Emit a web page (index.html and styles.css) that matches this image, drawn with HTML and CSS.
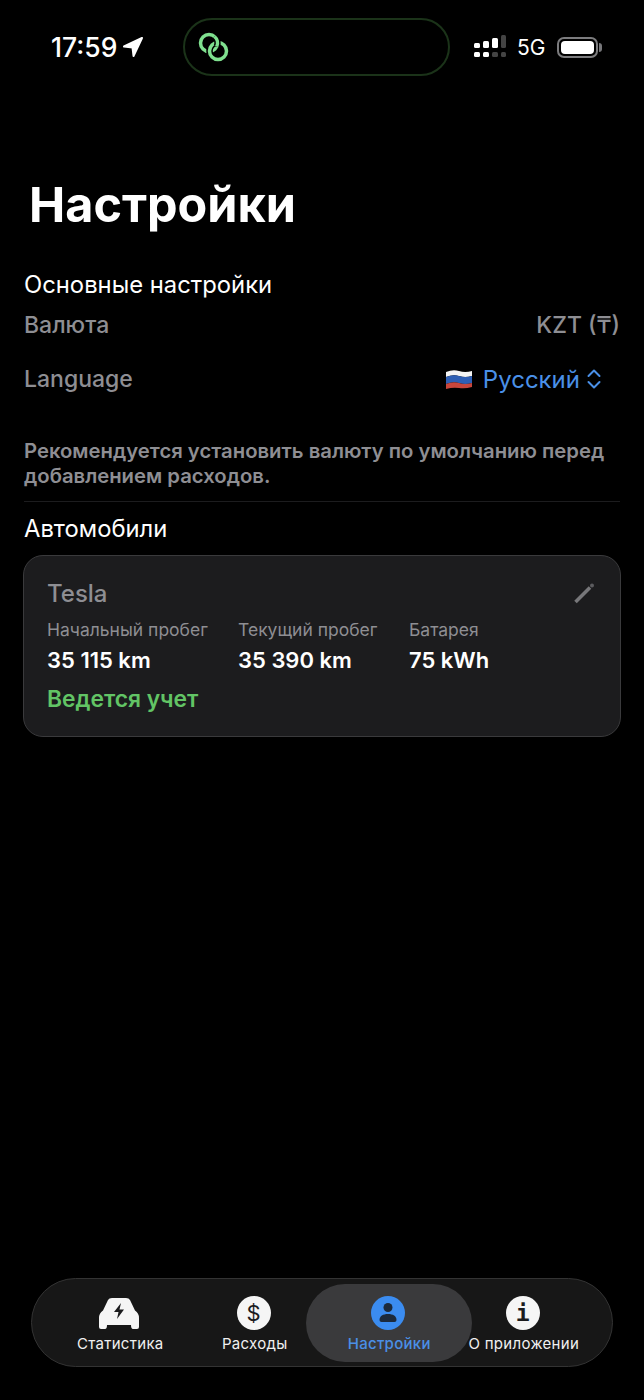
FILE: index.html
```html
<!DOCTYPE html>
<html lang="ru">
<head>
   <meta charset="UTF-8">
   <meta name="viewport" content="width=device-width, initial-scale=1.0">
   <title>Настройки</title>
   <link rel="stylesheet" href="styles.css">
</head>
<body>
   <div class="screen">
      <div class="status-bar">
         <div class="status-left">
            <span class="clock">17:59</span>
            <svg class="location" width="22" height="22" viewBox="0 0 22 22"><path d="M20 2 2 10.500 10.500 11.500 11.500 20Z" fill="#fff" stroke="#fff" stroke-width="2" stroke-linejoin="round"/></svg>
         </div>
         <div class="island">
            <svg width="36" height="32" viewBox="0 0 36 32" fill="none">
               <circle cx="13" cy="12" r="8.500" stroke="#7fe08f" stroke-width="3.500"/>
               <circle cx="22" cy="20" r="8.500" stroke="#000" stroke-width="6.500"/>
               <circle cx="22" cy="20" r="8.500" stroke="#7fe08f" stroke-width="3.500"/>
               <path d="M18.460 5.490A8.500 8.500 0 0 1 20.700 15.590" stroke="#000" stroke-width="6.500"/>
               <path d="M18.460 5.490A8.500 8.500 0 0 1 20.700 15.590" stroke="#7fe08f" stroke-width="3.500"/>
            </svg>
         </div>
         <div class="status-right">
            <svg width="33" height="24" viewBox="0 0 33 24">
               <g fill="#fff">
                  <rect x="0" y="8" width="6" height="5" rx="1.500"/><rect x="0" y="17" width="6" height="5" rx="1.500"/>
                  <rect x="9" y="6" width="6" height="7" rx="1.500"/><rect x="9" y="17" width="6" height="5" rx="1.500"/>
                  <rect x="18" y="3" width="6" height="10" rx="1.500"/>
               </g>
               <g fill="#444">
                  <rect x="18" y="17" width="6" height="5" rx="1.500"/>
                  <rect x="27" y="0" width="5" height="13" rx="1.500"/><rect x="27" y="17" width="5" height="5" rx="1.500"/>
               </g>
            </svg>
            <span class="network">5G</span>
            <div class="battery"><div class="battery-fill"></div></div>
         </div>
      </div>

      <main class="content">
         <h1 class="title">Настройки</h1>

         <h2 class="section-title">Основные настройки</h2>
         <div class="setting-row">
            <span>Валюта</span>
            <span>KZT (₸)</span>
         </div>
         <div class="setting-row">
            <span>Language</span>
            <span class="language-picker">
               <svg width="28" height="21" viewBox="0 0 28 21">
                  <path d="M1 3Q8 0 14 2T27 2V7Q20 9 14 7T1 8Z" fill="#f4f4f4"/>
                  <path d="M1 8Q8 5 14 7T27 7V14Q20 16 14 14T1 15Z" fill="#2e5fb5"/>
                  <path d="M1 15Q8 12 14 14T27 14V18Q20 20 14 19T1 20Z" fill="#c8463c"/>
               </svg>
               <span>Русский</span>
               <svg width="16" height="22" viewBox="0 0 16 22" fill="none" stroke="#4a90e8" stroke-width="2" stroke-linecap="round" stroke-linejoin="round"><path d="M2.500 8 8 2.500 13.500 8M2.500 14 8 19.500 13.500 14"/></svg>
            </span>
         </div>
         <p class="hint">Рекомендуется установить валюту по умолчанию перед добавлением расходов.</p>

         <h2 class="section-title cars-title">Автомобили</h2>
         <div class="car-card">
            <div class="car-head">
               <span class="car-name">Tesla</span>
               <svg width="24" height="24" viewBox="0 0 24 24" fill="none"><path d="M3.500 21 18 6.500" stroke="#77777a" stroke-width="3.500"/><circle cx="20" cy="4.500" r="2" fill="#5c5c5f"/></svg>
            </div>
            <div class="car-stats">
               <div class="stat stat-start">
                  <span class="stat-label">Начальный пробег</span>
                  <span class="stat-value">35 115 km</span>
               </div>
               <div class="stat stat-current">
                  <span class="stat-label">Текущий пробег</span>
                  <span class="stat-value">35 390 km</span>
               </div>
               <div class="stat">
                  <span class="stat-label">Батарея</span>
                  <span class="stat-value">75 kWh</span>
               </div>
            </div>
            <div class="car-status">Ведется учет</div>
         </div>
      </main>

      <nav class="tab-bar">
         <a class="tab" href="#">
            <svg width="42" height="34" viewBox="0 0 42 34"><path d="M10 4Q11 2 14 2H28Q31 2 32 4L37 14.500Q41 17 41 22V31Q41 33 39 33H35Q33 33 33 29H9Q9 33 7 33H3Q1 33 1 31V22Q1 17 5 14.500Z" fill="#f5f5f5"/><path d="M23 7 16 16H20.500L19 23 26 13.500H21.500Z" fill="#1b1b1d"/></svg>
            <span>Статистика</span>
         </a>
         <a class="tab" href="#">
            <span class="round-icon">$</span>
            <span>Расходы</span>
         </a>
         <a class="tab tab-active" href="#">
            <svg width="34" height="34" viewBox="0 0 34 34"><circle cx="17" cy="17" r="17" fill="#3b8cf0"/><circle cx="17" cy="11.500" r="4.500" fill="#1c2a3c"/><path d="M8.500 24C8.500 20 12 18 17 18S25.500 20 25.500 24Q25.500 26 23.500 26H10.500Q8.500 26 8.500 24Z" fill="#1c2a3c"/></svg>
            <span>Настройки</span>
         </a>
         <a class="tab" href="#">
            <span class="round-icon info-icon">i</span>
            <span>О приложении</span>
         </a>
      </nav>
   </div>
</body>
</html>
```

FILE: styles.css
```css
* {
   box-sizing: border-box;
}

body {
   margin: 0;
   background-color: #000;
   color: #fff;
   font-family: 'Inter', 'Noto Sans', sans-serif;
}

.screen {
   display: flex;
   flex-direction: column;
   height: 1400px;
   overflow: hidden;
}

/* Status bar */
.status-bar {
   display: flex;
   align-items: center;
   height: 58px;
   margin-top: 18px;
   padding-left: 51px;
}
.status-left {
   display: flex;
   align-items: center;
   gap: 5px;
   width: 132px;
}
.clock {
   font-size: 26.500px;
   font-weight: 500;
}
.island {
   display: flex;
   align-items: center;
   width: 267px;
   height: 58px;
   padding-left: 11px;
   border: 2px solid #1b3319;
   border-radius: 29px;
}
.status-right {
   display: flex;
   align-items: center;
   margin-left: 24px;
}
.network {
   margin-left: 10px;
   font-size: 21px;
}
.battery {
   position: relative;
   width: 41px;
   height: 21px;
   margin-left: 12px;
   padding: 2px;
   border: 2px solid #7c7c7e;
   border-radius: 7px;
}
.battery::after {
   content: "";
   position: absolute;
   top: 4px;
   right: -6px;
   width: 3px;
   height: 9px;
   background-color: #77777a;
   border-radius: 0 3px 3px 0;
}
.battery-fill {
   height: 100%;
   background-color: #fff;
   border-radius: 4px;
}

/* Main content */
.content {
   flex: 1;
   padding: 0 24px 0 24px;
}
.title {
   margin: 97px 0 0 5px;
   font-size: 48.500px;
   line-height: 64px;
   font-weight: 700;
}
.section-title {
   margin: 33px 0 0;
   font-size: 23.800px;
   line-height: 30px;
   font-weight: 400;
}
.setting-row {
   display: flex;
   justify-content: space-between;
   align-items: center;
   height: 54px;
   color: #8e8e93;
   font-size: 23px;
   font-weight: 500;
}
.setting-row:first-of-type {
   margin-top: -2px;
}
.language-picker {
   display: flex;
   align-items: center;
   gap: 10px;
   margin-right: 18px;
   color: #4a90e8;
   font-size: 24px;
   font-weight: 400;
}
.language-picker svg:last-child {
   margin-left: -4px;
}
.hint {
   margin: 32px 0 0;
   padding-bottom: 13px;
   border-bottom: 1px solid #1c1c1e;
   color: #8e8e93;
   font-size: 20.300px;
   line-height: 25px;
   font-weight: 600;
}
.section-title.cars-title {
   margin-top: 12px;
}

/* Car card */
.car-card {
   width: 598px;
   height: 182px;
   margin: 11px 0 0 -1px;
   padding: 19px 24px 19px 23px;
   background-color: #1c1c1e;
   border: 1.500px solid #3a3a3c;
   border-radius: 20px;
}
.car-head {
   display: flex;
   justify-content: space-between;
   align-items: center;
   height: 36px;
}
.car-name {
   color: #8e8e93;
   font-size: 24px;
   font-weight: 500;
}
.car-stats {
   display: flex;
   margin-top: 7px;
}
.stat {
   display: flex;
   flex-direction: column;
}
.stat-start {
   width: 191px;
}
.stat-current {
   width: 171px;
}
.stat-label {
   color: #8e8e93;
   font-size: 17.500px;
   line-height: 24px;
}
.stat-value {
   margin-top: 4px;
   font-size: 22px;
   line-height: 28px;
   font-weight: 600;
}
.car-status {
   margin-top: 10px;
   color: #62c465;
   font-size: 22.800px;
   line-height: 30px;
   font-weight: 600;
}

/* Bottom tabs */
.tab-bar {
   display: flex;
   flex-shrink: 0;
   width: 582px;
   height: 89px;
   margin: 0 0 33px 31px;
   padding: 5px 21px 4px;
   background-color: #171717;
   border: 1.500px solid #333;
   border-radius: 45px;
}
.tab {
   position: relative;
   display: flex;
   flex-direction: column;
   align-items: center;
   width: 134.500px;
   padding-top: 12px;
   color: #f0f0f0;
   font-size: 15px;
   font-weight: 400;
   letter-spacing: 0.300px;
   text-decoration: none;
   white-space: nowrap;
}
.tab svg,
.tab span {
   position: relative;
}
.tab > span:last-child {
   margin-top: 4px;
   line-height: 20px;
}
.tab > svg,
.round-icon {
   margin-left: -2px;
}
.tab > svg {
   height: 34px;
}
.tab-active {
   color: #4a8fe7;
   font-weight: 500;
}
.tab-active::before {
   content: "";
   position: absolute;
   top: 0;
   bottom: 0;
   left: -16px;
   right: -15px;
   background-color: #3a3a3c;
   border-radius: 39px;
}
.round-icon {
   display: flex;
   justify-content: center;
   align-items: center;
   width: 34px;
   height: 34px;
   background-color: #f5f5f5;
   border-radius: 50%;
   color: #1b1b1d;
   font-size: 22px;
   font-weight: 400;
}
.info-icon {
   font-family: 'DejaVu Sans Mono', monospace;
   font-size: 23px;
   font-weight: 700;
}
```
